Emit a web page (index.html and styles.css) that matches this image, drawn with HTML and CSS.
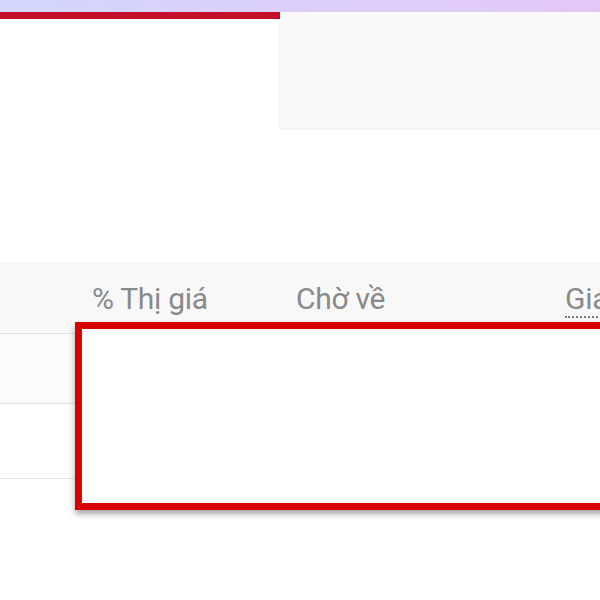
FILE: index.html
```html
<!DOCTYPE html>
<html lang="vi">
<head>
  <meta charset="UTF-8" />
  <title>Bảng giá</title>
  <link rel="stylesheet" href="styles.css">
</head>
<body>
  <div class="topbar"></div>

  <div class="top-row">
    <div class="progress"></div>
    <div class="side-panel"></div>
  </div>

  <div class="spacer"></div>

  <div class="table">
    <div class="row head">
      <div class="cell first"></div>
      <div class="cell">% Thị giá</div>
      <div class="cell">Chờ về</div>
      <div class="cell"><span class="hint">Giá vốn</span></div>
    </div>
    <div class="row shaded">
      <div class="cell first"></div>
      <div class="cell"></div>
      <div class="cell"></div>
      <div class="cell"></div>
    </div>
    <div class="row tall">
      <div class="cell first"></div>
      <div class="cell"></div>
      <div class="cell"></div>
      <div class="cell"></div>
    </div>
  </div>

  <div class="highlight"></div>
</body>
</html>
```

FILE: styles.css
```css
body {
  margin: 0;
  padding: 0;
  width: 600px;
  height: 600px;
  overflow: hidden;
  background: #fff;
  font-family: Roboto, 'Liberation Sans', sans-serif;
  position: relative;
}

.topbar {
  height: 12px;
  background: linear-gradient(to right, #d2d6fc, #dcd0fb 50%, #e3c7f8);
}

.top-row {
  display: flex;
  height: 116px;
}

.progress {
  width: 280px;
  height: 7px;
  background: #c50f2a;
}

.side-panel {
  flex: 1;
  background: #fafafa;
  box-shadow: 0 1px 2px rgba(0,0,0,0.08), -1px 0 2px rgba(0,0,0,0.04);
}

.spacer {
  height: 135px;
}

.table {
  width: 760px;
}

.row {
  display: grid;
  grid-template-columns: 92px 204px 269px 195px;
  height: 69px;
  border-bottom: 1px solid #e2e2e2;
}

.row.head {
  height: 70px;
  background: #f8f8f8;
}

.row.shaded {
  background: #fbfbfb;
}

.row.tall {
  height: 74px;
}

.cell {
  font-size: 30px;
  color: #8a8a8a;
  padding-top: 18px;
  letter-spacing: -0.3px;
  white-space: nowrap;
}

.hint {
  border-bottom: 2px dotted #777;
  padding-bottom: 0;
}

.highlight {
  position: absolute;
  left: 75px;
  top: 322px;
  width: 560px;
  height: 174px;
  background: #fff;
  border: 7px solid #d90000;
  box-shadow: 0 4px 6px rgba(0,0,0,0.35);
}
```
